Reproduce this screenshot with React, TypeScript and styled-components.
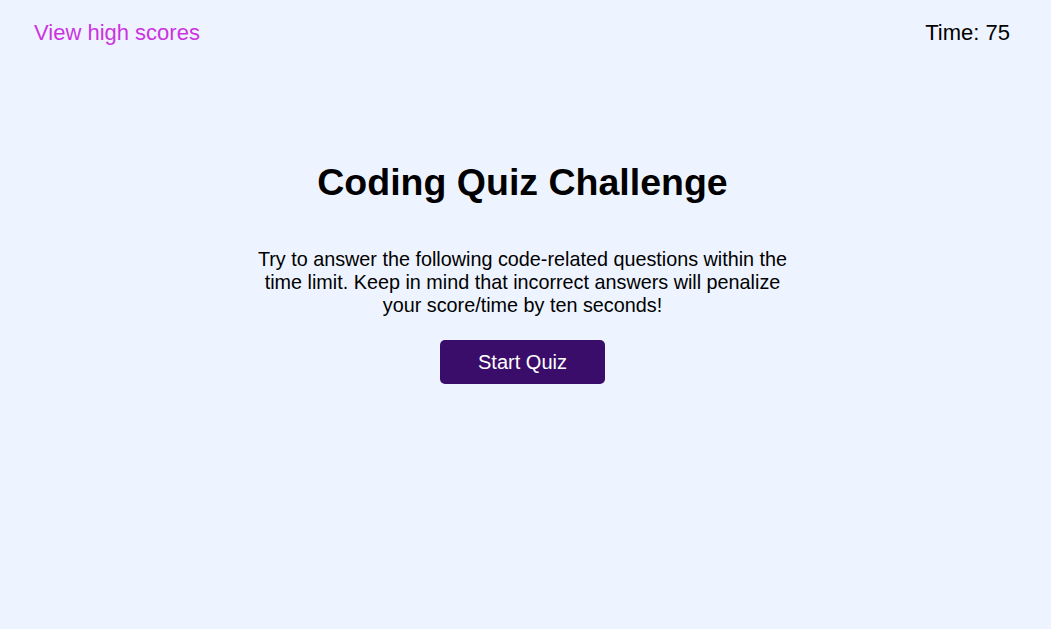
import React from 'react'
import styled, { createGlobalStyle } from 'styled-components'

const GlobalStyle = createGlobalStyle`
  html, body {
    margin: 0;
    padding: 0;
    background: #edf4ff;
    font-family: "Liberation Sans", Arial, sans-serif;
    color: #000;
  }
`

const Page = styled.div`
  min-height: 629px;
  display: flex;
  flex-direction: column;
`

const Header = styled.header`
  display: flex;
  justify-content: space-between;
  align-items: center;
  padding: 20px 41px 0 34px;
  font-size: 22px;
  line-height: 25px;
`

const HighScoresLink = styled.a`
  color: #cc33e0;
  text-decoration: none;
  cursor: pointer;
`

const Timer = styled.div`
  color: #000;
`

const Main = styled.main`
  display: flex;
  flex-direction: column;
  align-items: center;
  text-align: center;
  padding: 116px 6px 0 0;
`

const Title = styled.h1`
  margin: 0;
  font-size: 37.5px;
  line-height: 43px;
  font-weight: bold;
`

const Intro = styled.p`
  margin: 44px 0 0;
  max-width: 545px;
  font-size: 19.8px;
  line-height: 23px;
`

const StartButton = styled.button`
  margin-top: 23px;
  width: 165px;
  height: 44px;
  border: none;
  border-radius: 5px;
  background: #3a0d6b;
  color: #fff;
  font-family: inherit;
  font-size: 20px;
  cursor: pointer;
`

export default function App() {
  return (
    <>
      <GlobalStyle />
      <Page>
        <Header>
          <HighScoresLink>View high scores</HighScoresLink>
          <Timer>Time: 75</Timer>
        </Header>
        <Main>
          <Title>Coding Quiz Challenge</Title>
          <Intro>
            Try to answer the following code-related questions within the time limit. Keep in mind
            that incorrect answers will penalize your score/time by ten seconds!
          </Intro>
          <StartButton>Start Quiz</StartButton>
        </Main>
      </Page>
    </>
  )
}
